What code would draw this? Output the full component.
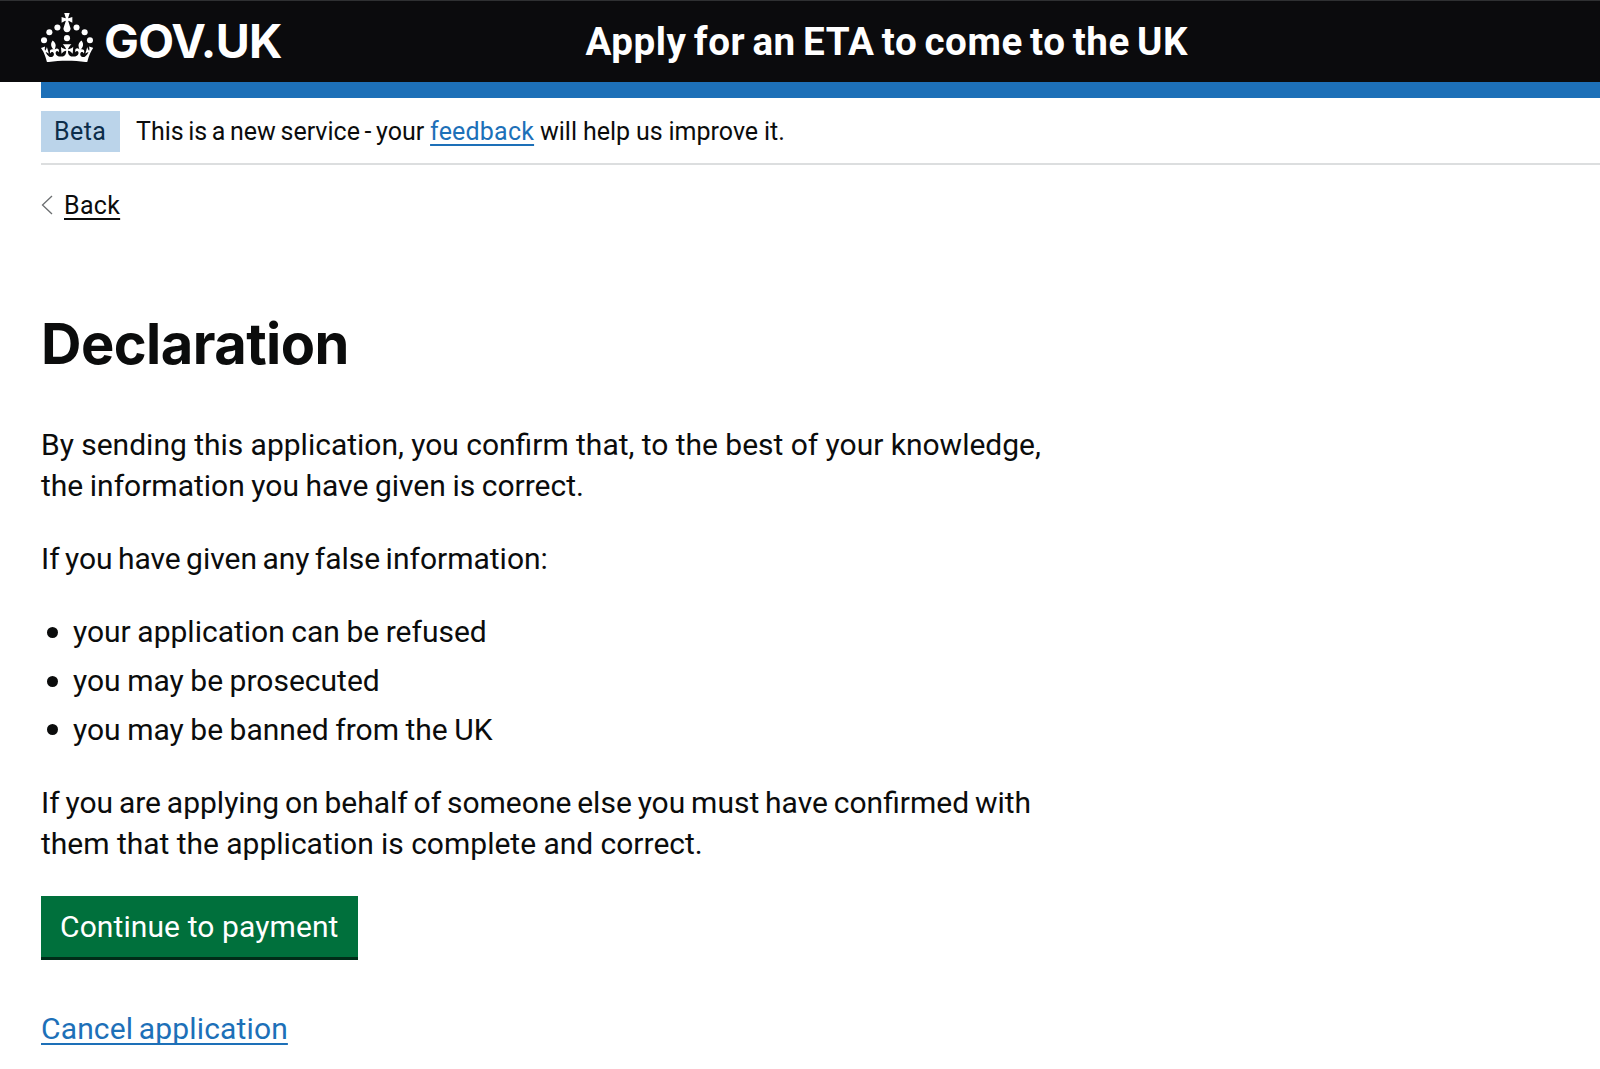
<header class="header">
  <a class="logo" href="/" aria-label="GOV.UK">
    <svg class="crown" viewBox="0 0 63.4 60" aria-hidden="true">
      <circle cx="20" cy="17.6" r="3.7" />
      <circle cx="10.2" cy="23.5" r="3.7" />
      <circle cx="3.7" cy="33.2" r="3.7" />
      <circle cx="31.7" cy="30.6" r="3.7" />
      <circle cx="43.3" cy="17.6" r="3.7" />
      <circle cx="53.2" cy="23.5" r="3.7" />
      <circle cx="59.7" cy="33.2" r="3.7" />
      <path d="M33.1,9.8c.2-.1.3-.3.5-.5l4.6,2.4v-6.8l-4.6,1.5c-.1-.2-.3-.3-.5-.5l1.9-5.9h-6.7l1.9,5.9c-.2.1-.3.3-.5.5l-4.6-1.5v6.8l4.6-2.4c.1.2.3.3.5.5l-2.6,8c-.9,2.8,1.2,5.7,4.1,5.7h0c3,0,5.1-2.9,4.1-5.7l-2.6-8ZM37,37.9s-3.4,3.8-4.1,6.1c2.2,0,4.2-.5,6.4-2.8l-.7,8.5c-2-2.8-4.4-4.1-5.7-3.8.1,3.1.5,6.7,5.8,7.2,3.7.3,6.7-1.5,7-3.8.4-2.6-2-4.3-3.7-1.6-1.4-4.5,2.4-6.1,4.9-3.2-1.9-4.5-1.8-7.7,2.4-10.9,3,4,2.6,7.3-1.2,11.1,2.4-1.3,6.2,0,4,4.6-1.2-2.8-3.7-2.2-4.2.2-.3,1.7.7,3.7,3,4.2,1.9.3,4.7-.9,7-5.9-1.3,0-2.4.7-3.9,1.7l2.4-8c.6,2.3,1.4,3.7,2.2,4.5.6-1.6.5-2.8,0-5.3l5,1.8c-2.6,3.6-5.2,8.7-7.3,17.5-7.4-1.1-15.7-1.7-24.5-1.7h0c-8.8,0-17.1.6-24.5,1.7-2.1-8.9-4.7-13.9-7.3-17.5l5-1.8c-.5,2.5-.6,3.7,0,5.3.8-.8,1.6-2.3,2.2-4.5l2.4,8c-1.5-1-2.6-1.7-3.9-1.7,2.3,5,5.2,6.2,7,5.9,2.3-.4,3.3-2.4,3-4.2-.5-2.4-3-3.1-4.2-.2-2.2-4.6,1.6-6,4-4.6-3.7-3.7-4.2-7.1-1.2-11.1,4.2,3.2,4.3,6.4,2.4,10.9,2.5-2.8,6.3-1.3,4.9,3.2-1.8-2.7-4.1-1-3.7,1.6.3,2.3,3.3,4.1,7,3.8,5.4-.5,5.7-4.2,5.8-7.2-1.3-.2-3.7,1-5.7,3.8l-.7-8.5c2.2,2.3,4.2,2.7,6.4,2.8-.7-2.3-4.1-6.1-4.1-6.1h10.6Z" />
    </svg>
    <span class="wordmark">GOV.UK</span>
  </a>
  <span class="service">Apply for an ETA to come to the UK</span>
</header>

<div class="container">
  <div class="bar"></div>
  <div class="phase">
    <strong class="tag">Beta</strong>
    <span class="phase-text"><span class="lead">This is a new service - your</span> <a class="feedback" href="/feedback">feedback</a> <span>will help us improve it.</span></span>
  </div>
  <a class="back" href="/back">
    <svg class="chevron" viewBox="0 0 12 20" aria-hidden="true"><path d="M11 1 1.5 10 11 19" /></svg>
    <span class="back-text">Back</span>
  </a>

  <main>
    <h1>Declaration</h1>
    <p>
      By sending this application, you confirm that, to the best of your knowledge,<br />
      <span class="snug">the information you have given is correct.</span>
    </p>
    <p class="tightest">If you have given any false information:</p>
    <ul class="snug">
      <li>your application can be refused</li>
      <li>you may be prosecuted</li>
      <li>you may be banned from the UK</li>
    </ul>
    <p>
      <span class="tight">If you are applying on behalf of someone else you must have confirmed with</span><br />
      <span>them that the application is complete and correct.</span>
    </p>
    <button type="button">Continue to payment</button>
    <div class="cancel"><a href="/cancel">Cancel application</a></div>
  </main>
</div>

<style>
  :global(body) {
    margin: 0;
    background: #fff;
    color: #0b0c0c;
    font-family: Roboto, 'Liberation Sans', sans-serif;
  }
  .header {
    box-sizing: border-box;
    height: 82px;
    padding-left: 40.5px;
    border-top: 1px solid #2f3032;
    background: #0b0b0d;
    color: #fff;
    display: flex;
  }
  .logo {
    display: flex;
    width: 545px;
    color: #fff;
    text-decoration: none;
  }
  .crown {
    width: 52px;
    height: 49.3px;
    margin-top: 11.5px;
    fill: #fff;
  }
  .wordmark {
    margin-left: 11.5px;
    font: 700 46.5px/81px Inter, Roboto, sans-serif;
    letter-spacing: -0.75px;
  }
  .service {
    font-size: 38.6px;
    font-weight: 700;
    line-height: 82px;
    letter-spacing: 0.55px;
    word-spacing: -2.9px;
    white-space: nowrap;
  }
  .container {
    padding-left: 41px;
  }
  .bar {
    height: 16px;
    background: #1d70b8;
  }
  .phase {
    box-sizing: border-box;
    display: flex;
    gap: 16px;
    height: 67px;
    padding-top: 13px;
    border-bottom: 2px solid #dcdedf;
    font-size: 25px;
    line-height: 41px;
    white-space: nowrap;
  }
  .tag {
    box-sizing: border-box;
    width: 79px;
    height: 41px;
    padding-left: 13px;
    background: #bbd4ea;
    color: #0c2d4a;
    font-weight: 400;
    letter-spacing: 0.4px;
  }
  .phase-text {
    word-spacing: -0.3px;
  }
  .lead {
    word-spacing: -1.6px;
  }
  a {
    color: #1d70b8;
    text-decoration-thickness: 2px;
    text-underline-offset: 4px;
    text-decoration-skip-ink: none;
  }
  .feedback {
    letter-spacing: 0.2px;
  }
  .back {
    display: flex;
    align-items: center;
    width: max-content;
    margin-top: 20px;
    color: #0b0c0c;
    font-size: 25px;
    line-height: 41px;
    text-decoration: none;
  }
  .chevron {
    width: 12px;
    height: 20px;
    margin: -2px 11px 0 0;
    fill: none;
    stroke: #6b6e70;
    stroke-width: 1.3;
  }
  .back-text {
    letter-spacing: 0.3px;
    text-decoration: underline 2px;
    text-underline-offset: 4px;
  }
  main {
    padding-top: 86px;
    font-size: 30px;
    line-height: 40.7px;
    word-spacing: -0.1px;
    white-space: nowrap;
  }
  h1 {
    margin: 0 0 49px;
    font: 700 56px/64px Inter, Roboto, sans-serif;
    letter-spacing: -0.55px;
  }
  p,
  ul {
    margin: 0 0 32.6px;
  }
  .snug {
    word-spacing: -0.9px;
  }
  .tight {
    word-spacing: -1.6px;
  }
  .tightest {
    word-spacing: -2.1px;
  }
  ul {
    padding: 0 0 0 32px;
    list-style: none;
  }
  li {
    position: relative;
    margin-bottom: 8.1px;
  }
  li:last-child {
    margin-bottom: 0;
  }
  li::before {
    content: '';
    position: absolute;
    left: -26.5px;
    top: 14.5px;
    width: 11px;
    height: 11px;
    border-radius: 50%;
    background: #0b0c0c;
  }
  button {
    display: block;
    box-sizing: border-box;
    width: 317px;
    height: 61px;
    margin-top: -1.2px;
    padding: 0 0 0 19px;
    border: 0;
    background: #00703c;
    box-shadow: 0 3px 0 #002d18;
    color: #fff;
    font: 400 30px/62px Roboto, 'Liberation Sans', sans-serif;
    letter-spacing: 0.1px;
    text-align: left;
  }
  .cancel {
    margin-top: 52.2px;
    letter-spacing: 0.15px;
    word-spacing: -2px;
  }
</style>
